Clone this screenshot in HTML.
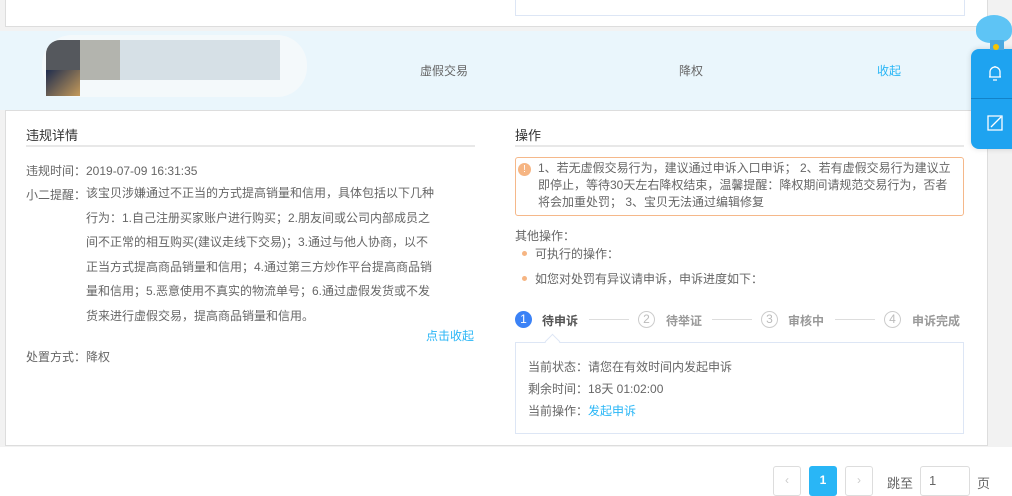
<!DOCTYPE html>
<html><head><meta charset="utf-8"><style>
*{margin:0;padding:0;box-sizing:border-box}
body{width:1012px;height:490px;overflow:hidden;background:#fff;font-family:"Liberation Sans","Noto Sans CJK SC",sans-serif;font-size:12px;color:#666;position:relative}
.a{position:absolute}
.t{white-space:nowrap}
</style></head><body>
<div class="a" style="left:0;top:0;width:1012px;height:447px;background:#f2f2f2"></div>
<div class="a" style="left:5px;top:0;width:983px;height:27px;background:#fff;border:1px solid #ddd;border-top:none"></div>
<div class="a" style="left:515px;top:0;width:450px;height:16px;border:1px solid #dde6f5;border-top:none"></div>
<div class="a" style="left:0;top:31px;width:990px;height:79px;background:#eaf6fc"></div>
<div class="a" style="left:42px;top:35px;width:265px;height:62px;background:#f4f9fb;border-radius:30px"></div>
<div class="a" style="left:46px;top:40px;width:34px;height:40px;background:#55585d;border-radius:14px 0 0 0"></div>
<div class="a" style="left:46px;top:70px;width:34px;height:26px;background:linear-gradient(135deg,#1f2d4e,#c49a5a)"></div>
<div class="a" style="left:80px;top:40px;width:40px;height:40px;background:#b3b4ae"></div>
<div class="a" style="left:120px;top:40px;width:160px;height:40px;background:#d6e0e6"></div>
<div class="a t" style="left:420px;top:62px;color:#666">虚假交易</div>
<div class="a t" style="left:679px;top:62px;color:#666">降权</div>
<div class="a t" style="left:877px;top:62px;color:#29b6f6">收起</div>
<div class="a" style="left:5px;top:110px;width:983px;height:336px;background:#fff;border:1px solid #ddd"></div>
<div class="a t" style="left:26px;top:125px;font-size:13px;color:#333">违规详情</div>
<div class="a" style="left:26px;top:145px;width:449px;height:2px;background:#e8e8e8"></div>
<div class="a t" style="left:26px;top:162px">违规时间：2019-07-09 16:31:35</div>
<div class="a t" style="left:26px;top:186px">小二提醒：</div>
<div class="a" style="left:86px;top:181px;width:350px;line-height:24.6px">该宝贝涉嫌通过不正当的方式提高销量和信用，具体包括以下几种行为：1.自己注册买家账户进行购买；2.朋友间或公司内部成员之间不正常的相互购买(建议走线下交易)；3.通过与他人协商，以不正当方式提高商品销量和信用；4.通过第三方炒作平台提高商品销量和信用；5.恶意使用不真实的物流单号；6.通过虚假发货或不发货来进行虚假交易，提高商品销量和信用。</div>
<div class="a t" style="left:426px;top:327px;color:#29b6f6">点击收起</div>
<div class="a t" style="left:26px;top:348px">处置方式：降权</div>
<div class="a t" style="left:515px;top:125px;font-size:13px;color:#333">操作</div>
<div class="a" style="left:515px;top:145px;width:449px;height:2px;background:#e8e8e8"></div>
<div class="a" style="left:515px;top:157px;width:449px;height:59px;border:1px solid #f5b88a;border-radius:3px"></div>
<div class="a" style="left:518px;top:163px;width:13px;height:13px;border-radius:50%;background:#f6b583;color:#fff;font-size:10px;text-align:center;line-height:13px">!</div>
<div class="a" style="left:538px;top:160px;width:416px;line-height:17px">1、若无虚假交易行为，建议通过申诉入口申诉； 2、若有虚假交易行为建议立即停止，等待30天左右降权结束，温馨提醒：降权期间请规范交易行为，否者将会加重处罚； 3、宝贝无法通过编辑修复</div>
<div class="a t" style="left:515px;top:227px">其他操作：</div>
<div class="a" style="left:522px;top:251px;width:5px;height:5px;border-radius:50%;background:#f6b583"></div>
<div class="a t" style="left:535px;top:245px">可执行的操作：</div>
<div class="a" style="left:522px;top:276px;width:5px;height:5px;border-radius:50%;background:#f6b583"></div>
<div class="a t" style="left:535px;top:270px">如您对处罚有异议请申诉，申诉进度如下：</div>
<div class="a" style="left:515px;top:311px;width:17px;height:17px;border-radius:50%;background:#3b82f6;color:#fff;text-align:center;line-height:17px">1</div>
<div class="a t" style="left:542px;top:312px;font-weight:bold;color:#555">待申诉</div>
<div class="a" style="left:589px;top:319px;width:40px;height:1px;background:#ddd"></div>
<div class="a" style="left:638px;top:311px;width:17px;height:17px;border-radius:50%;border:1px solid #ccc;color:#bbb;text-align:center;line-height:15px">2</div>
<div class="a t" style="left:666px;top:312px;font-weight:bold;color:#999">待举证</div>
<div class="a" style="left:712px;top:319px;width:40px;height:1px;background:#ddd"></div>
<div class="a" style="left:761px;top:311px;width:17px;height:17px;border-radius:50%;border:1px solid #ccc;color:#bbb;text-align:center;line-height:15px">3</div>
<div class="a t" style="left:788px;top:312px;font-weight:bold;color:#999">审核中</div>
<div class="a" style="left:835px;top:319px;width:40px;height:1px;background:#ddd"></div>
<div class="a" style="left:884px;top:311px;width:17px;height:17px;border-radius:50%;border:1px solid #ccc;color:#bbb;text-align:center;line-height:15px">4</div>
<div class="a t" style="left:912px;top:312px;font-weight:bold;color:#999">申诉完成</div>
<div class="a" style="left:515px;top:342px;width:449px;height:92px;border:1px solid #dde6f5"></div>
<div class="a" style="left:547px;top:336px;width:11px;height:11px;background:#fff;border-left:1px solid #dde6f5;border-top:1px solid #dde6f5;transform:rotate(45deg)"></div>
<div class="a t" style="left:528px;top:358px">当前状态：请您在有效时间内发起申诉</div>
<div class="a t" style="left:528px;top:380px">剩余时间：18天 01:02:00</div>
<div class="a t" style="left:528px;top:402px">当前操作：<span style="color:#29b6f6">发起申诉</span></div>
<div class="a" style="left:773px;top:466px;width:28px;height:30px;border:1px solid #ddd;border-radius:3px;color:#ccc;text-align:center;line-height:26px">‹</div>
<div class="a" style="left:809px;top:466px;width:28px;height:30px;background:#29b6f6;border-radius:3px;color:#fff;text-align:center;line-height:28px;font-weight:bold">1</div>
<div class="a" style="left:845px;top:466px;width:28px;height:30px;border:1px solid #ddd;border-radius:3px;color:#ccc;text-align:center;line-height:26px">›</div>
<div class="a t" style="left:887px;top:473px;font-size:13px">跳至</div>
<div class="a" style="left:920px;top:466px;width:50px;height:30px;border:1px solid #ddd;border-radius:3px;padding:6px 8px;font-size:13px">1</div>
<div class="a t" style="left:977px;top:473px;font-size:13px">页</div>
<div class="a" style="left:971px;top:49px;width:50px;height:100px;background:#1ea3f0;border-radius:8px 0 0 8px;box-shadow:0 0 6px rgba(0,0,0,.15)"></div>
<div class="a" style="left:971px;top:98px;width:41px;height:1px;background:#1282c8"></div>
<svg class="a" style="left:986px;top:64px" width="18" height="18" viewBox="0 0 18 18" fill="none" stroke="#fff" stroke-width="1.3"><path d="M4 13V8a5 5 0 0110 0v5H3h12M7 16h4M9 3V2"/></svg>
<svg class="a" style="left:986px;top:114px" width="18" height="18" viewBox="0 0 18 18" fill="none" stroke="#fff" stroke-width="1.3"><path d="M2 2h14v14H2zM5 13L15 3"/></svg>
<div class="a" style="left:976px;top:15px;width:36px;height:28px;background:#5ec4f5;border-radius:50% 50% 40% 40%"></div>
<div class="a" style="left:990px;top:40px;width:14px;height:10px;background:#4aa8e0"></div>
<div class="a" style="left:993px;top:44px;width:6px;height:6px;border-radius:50%;background:#f5c400"></div>
</body></html>
